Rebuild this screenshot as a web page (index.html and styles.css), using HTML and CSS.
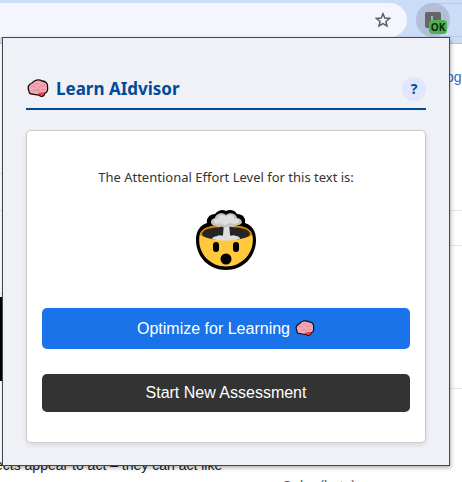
FILE: index.html
```html
<!DOCTYPE html>
<html lang="en">
<head>
<meta charset="utf-8">
<title>Learn AIdvisor</title>
<link rel="stylesheet" href="styles.css">
</head>
<body>
<svg class="defs" aria-hidden="true">
  <symbol id="brain" viewBox="0 0 22 20">
    <path d="M2 12C0 8 2 5 5 4C7 1 12 0 15 2C19 2 21 5 20.500 8C21 11 20 14 18 14C17 18 14 18 12 16C9 16 6 15 5 15C3 15 2 14 2 12Z" fill="#f4a6b5" stroke="#15090c" stroke-width="1.3"/>
    <path d="M11 14.500C13 13 16 13.500 17.500 13.500C16.500 17.500 13 17.500 11 14.500Z" fill="#e03b4b"/>
    <path d="M4 8C6 6 8 7 8 9M8 4C9 6 11 5 12 4M12 8C14 6 16 8 18 6M6 12C8 10 10 12 11 10M14 11C15 10 17 11 18 11M11 10L12 13" fill="none" stroke="#df7f93" stroke-width="0.9"/>
  </symbol>
</svg>

<header class="toolbar">
  <div class="address">
    <button class="icon-button" type="button" aria-label="Bookmark this tab">
      <svg width="16" height="16" viewBox="0 0 16 16"><path d="M8 1.800L9.800 6.100L14.500 6.500L10.900 9.500L12 14L8 11.600L4 14L5.100 9.500L1.500 6.500L6.200 6.100Z" fill="none" stroke="#5b5e63" stroke-width="1.500"/></svg>
    </button>
  </div>
  <div class="extensions">
    <button class="extension" type="button" aria-label="Learn AIdvisor extension">
      <svg width="16" height="16" viewBox="0 0 16 16"><rect width="16" height="16" rx="2" fill="#666"/><path d="M7 4V9H11" fill="none" stroke="#b5c3dd" stroke-width="1.500"/></svg>
      <span class="badge">OK</span>
    </button>
  </div>
</header>

<main class="page">
  <article class="article">
    <div class="line line-top"></div>
    <div class="line line-middle"></div>
    <div class="line line-bottom"></div>
    <div class="figure"></div>
    <p class="article-text">ects appear to act – they can act like</p>
  </article>
  <aside class="sidebar">
    <a class="side-link" href="#">og</a>
    <div class="line side-row-first"></div>
    <div class="line side-row-short"></div>
    <div class="line side-row-tall"></div>
    <p class="side-label">Color (beta)</p>
  </aside>
</main>

<section class="popup">
  <div class="popup-header">
    <svg class="title-icon" aria-hidden="true"><use href="#brain"/></svg>
    <h1>Learn AIdvisor</h1>
    <button class="help" type="button" aria-label="Help">?</button>
  </div>
  <div class="card">
    <p class="message">The Attentional Effort Level for this text is:</p>
    <svg class="face" viewBox="0 0 62 62" role="img" aria-label="Exploding head">
      <path d="M1 31C1 22 5 16 12 14C11 9 15 5 20 5C23 1 28 0 31 2C35 0 40 1 42 5C48 5 51 9 50 14C57 16 61 22 61 31C61 48 48 61 31 61C14 61 1 48 1 31Z" fill="#000"/>
      <path d="M4.500 27C5 19 15 16 31 16C47 16 57 19 57.500 27C60 44 47 57.500 31 57.500C15 57.500 2 44 4.500 27Z" fill="#ffc83d"/>
      <path d="M5 26C6 19 15 16 31 16C47 16 56 19 57 26L55 28H7Z" fill="#d67d00"/>
      <path d="M5 26C10 30 20 31 31 31C42 31 52 30 57 26L57.500 32H4.500Z" fill="#ffc83d"/>
      <path d="M7 25C8 20 16 18 31 18C46 18 54 20 55 25C54 29 44 31 31 31C18 31 8 29 7 25Z" fill="#252525"/>
      <path d="M17 30C18 27 21 28 22 27C25 25 27 28 28 26L29 14H34L35 26C36 28 38 25 41 27C43 27 45 28 45 30C37 32 25 32 17 30Z" fill="#dedede"/>
      <path d="M21 17C15 17 14 10 20 9C21 4 28 3 31 6C34 3 41 4 42 9C49 10 48 17 42 16C39 19 36 18 34 17C30 20 28 18 26 17C24 19 22 18 21 17Z" fill="#c3c3c3"/>
      <path d="M20 14C17 12 20 9 23 10C23 5 29 5 31 8C34 4 40 6 39 10C43 9 46 12 43 14C39 16 36 14 34 14C31 17 28 16 26 14C24 15 22 15 20 14Z" fill="#dedede"/>
      <rect x="18" y="33" width="6" height="10" rx="3" fill="#000"/>
      <rect x="38" y="33" width="6" height="10" rx="3" fill="#000"/>
      <circle cx="31" cy="50" r="5.500" fill="#000"/>
    </svg>
    <button class="action primary" type="button">Optimize for Learning <svg class="action-icon" aria-hidden="true"><use href="#brain"/></svg></button>
    <button class="action secondary" type="button">Start New Assessment</button>
  </div>
</section>
</body>
</html>
```
FILE: styles.css
```css
* { box-sizing: border-box; }
html { height: 100%; overflow: hidden; }
body {
  position: relative;
  height: 100%;
  margin: 0;
  overflow: hidden;
  background: #fff;
  color: #202122;
  font-family: "Liberation Sans", Arial, sans-serif;
}
h1, p { margin: 0; }
button { padding: 0; border: 0; font: inherit; }
.defs { position: absolute; width: 0; height: 0; }

.toolbar {
  display: flex;
  gap: 9px;
  height: 44px;
  padding-top: 3px;
  background: #cbdcf7;
  border-bottom: 1px solid #b3c3dc;
}
.address {
  flex: 1;
  display: flex;
  align-items: center;
  justify-content: flex-end;
  height: 34px;
  padding-right: 16px;
  border-radius: 0 17px 17px 0;
  background: #f3f6fc;
}
.icon-button { display: flex; background: none; }
.extensions {
  width: 46px;
  height: 34px;
  border: solid #b8c9e5;
  border-width: 1px 0;
  border-radius: 17px 0 0 17px;
}
.extension {
  position: relative;
  display: flex;
  align-items: center;
  justify-content: center;
  width: 34px;
  height: 34px;
  margin-top: -1px;
  padding-bottom: 1px;
  border-radius: 50%;
  background: #b1bfd8;
}
.badge {
  position: absolute;
  right: 3px;
  bottom: 3px;
  width: 18px;
  height: 14px;
  border-radius: 4px;
  background: #4caf50;
  color: #10270f;
  font: bold 10px/15px "Open Sans", sans-serif;
}

.page { display: flex; }
.line { border-bottom: 1px solid #e4e6ea; }
.article { width: 282px; }
.line-top { height: 130px; }
.line-middle { height: 37px; }
.line-bottom { height: 83px; margin-bottom: 3px; }
.figure { width: 200px; height: 84px; background: #000; }
.article-text {
  padding-top: 76px;
  font-size: 14px;
  line-height: 16px;
  text-indent: -5px;
  white-space: nowrap;
}
.sidebar { flex: 1; padding-top: 23px; }
.side-link {
  display: block;
  margin-left: 164px;
  color: #3366cc;
  font-size: 14px;
  line-height: 20px;
  text-decoration: none;
}
.side-row-first { height: 124px; }
.side-row-short { height: 35px; }
.side-row-tall { height: 143px; }
.side-label {
  padding-top: 89px;
  color: #54595d;
  font-size: 14px;
  line-height: 16px;
}

.popup {
  position: absolute;
  top: 37px;
  left: 2px;
  right: 12px;
  padding: 36px 23px 22px;
  border: 1px solid #43474d;
  background: #eff1f6;
  box-shadow: 1px 2px 4px rgba(0, 0, 0, 0.3);
  color: #333;
  font-family: "Noto Sans", sans-serif;
}
.popup-header {
  display: flex;
  align-items: center;
  gap: 7px;
  height: 36px;
  padding-bottom: 5px;
  border-bottom: 2px solid #004b99;
  color: #004b99;
}
.title-icon { width: 22px; height: 20px; margin-left: 1px; }
h1 { flex: 1; font-size: 17px; line-height: 24px; }
.help {
  width: 24px;
  height: 24px;
  border-radius: 50%;
  background: #e0e6ff;
  color: #004b99;
  font-size: 14px;
  font-weight: bold;
}
.card {
  display: flex;
  flex-direction: column;
  align-items: center;
  margin-top: 20px;
  padding: 36px 15px 30px;
  border: 1px solid #ccc;
  border-radius: 5px;
  background: #fff;
  box-shadow: 0 2px 5px rgba(0, 0, 0, 0.1);
}
.message { font-size: 13px; line-height: 20px; }
.face { width: 62px; height: 62px; margin: 22px 0 37px; }
.action {
  display: flex;
  align-items: center;
  justify-content: center;
  gap: 5px;
  width: 100%;
  border-radius: 5px;
  color: #fff;
  font-family: "Liberation Sans", Arial, sans-serif;
  font-size: 16px;
}
.primary { height: 41px; padding-top: 1px; background: #1a73e8; }
.secondary { height: 38px; margin-top: 25px; background: #333; }
.action-icon { width: 20px; height: 18px; }
```
